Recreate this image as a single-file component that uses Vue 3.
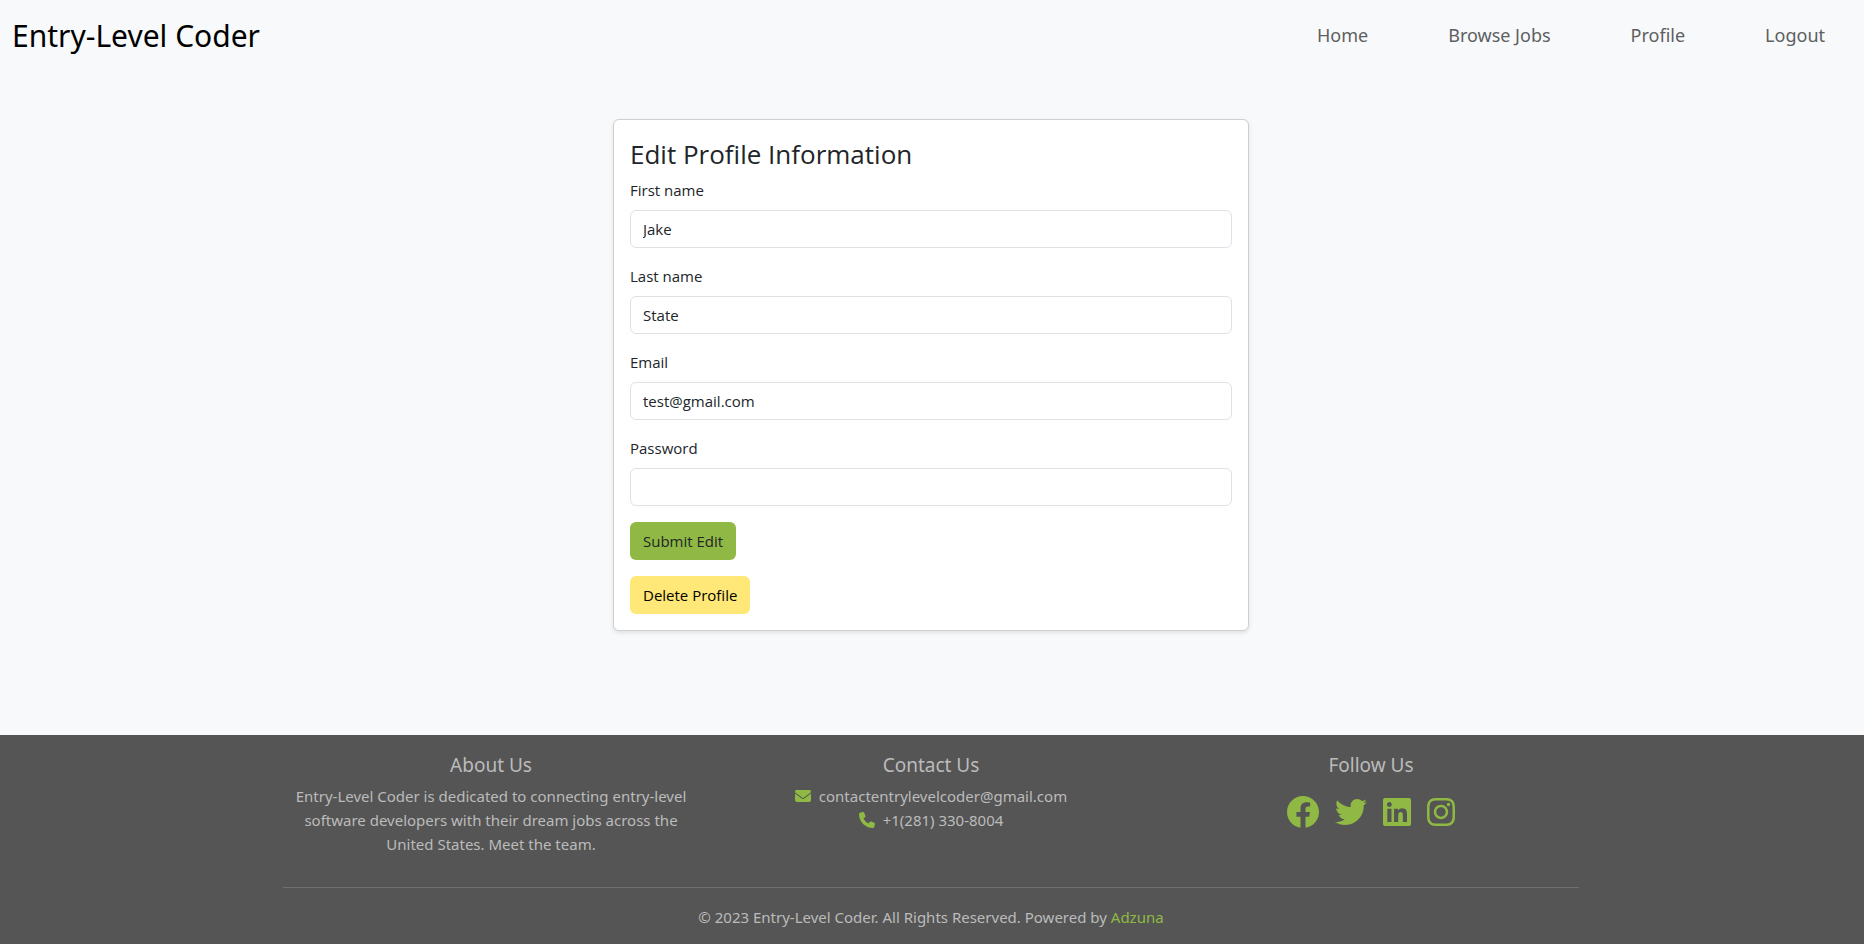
<script setup>
import { ref } from 'vue'

const links = ['Home', 'Browse Jobs', 'Profile', 'Logout']
const fields = ref([
  { id: 'first-name', label: 'First name', type: 'text', value: 'Jake' },
  { id: 'last-name', label: 'Last name', type: 'text', value: 'State' },
  { id: 'email', label: 'Email', type: 'email', value: 'test@gmail.com' },
  { id: 'password', label: 'Password', type: 'password', value: '' }
])
const socials = [
  { name: 'Facebook', box: '8 8 496 496', w: 32, d: 'M504 256C504 119 393 8 256 8S8 119 8 256c0 123.78 90.69 226.38 209.25 245V327.69h-63V256h63v-54.64c0-62.15 37-96.48 93.67-96.48 27.14 0 55.52 4.84 55.52 4.84v61h-31.28c-30.8 0-40.41 19.12-40.41 38.73V256h68.78l-11 71.69h-57.78V501C413.31 482.38 504 379.78 504 256z' },
  { name: 'Twitter', box: '0 0 512 512', w: 32, d: 'M459.37 151.716c.325 4.548.325 9.097.325 13.645 0 138.72-105.583 298.558-298.558 298.558-59.452 0-114.68-17.219-161.137-47.106 8.447.974 16.568 1.299 25.34 1.299 49.055 0 94.213-16.568 130.274-44.832-46.132-.975-84.792-31.188-98.112-72.772 6.498.974 12.995 1.624 19.818 1.624 9.421 0 18.843-1.3 27.614-3.573-48.081-9.747-84.143-51.98-84.143-102.985v-1.299c13.969 7.797 30.214 12.67 47.431 13.319-28.264-18.843-46.781-51.005-46.781-87.391 0-19.492 5.197-37.36 14.294-52.954 51.655 63.675 129.3 105.258 216.365 109.807-1.624-7.797-2.599-15.918-2.599-24.04 0-57.828 46.782-104.934 104.934-104.934 30.213 0 57.502 12.67 76.67 33.137 23.715-4.548 46.456-13.32 66.599-25.34-7.798 24.366-24.366 44.833-46.132 57.827 21.117-2.273 41.584-8.122 60.426-16.243-14.292 20.791-32.161 39.308-52.628 54.253z' },
  { name: 'LinkedIn', box: '0 0 448 512', w: 28, d: 'M416 32H31.9C14.3 32 0 46.5 0 64.3v383.4C0 465.5 14.3 480 31.9 480H416c17.6 0 32-14.5 32-32.3V64.3c0-17.8-14.4-32.3-32-32.3zM135.4 416H69V202.2h66.5V416zm-33.2-243c-21.3 0-38.5-17.3-38.5-38.5S80.9 96 102.2 96c21.2 0 38.5 17.3 38.5 38.5 0 21.3-17.2 38.5-38.5 38.5zm282.1 243h-66.4V312c0-24.8-.5-56.7-34.5-56.7-34.6 0-39.9 27-39.9 54.9V416h-66.4V202.2h63.7v29.2h.9c8.9-16.8 30.6-34.5 62.9-34.5 67.2 0 79.7 44.3 79.7 101.9V416z' },
  { name: 'Instagram', box: '0 0 448 512', w: 28, d: 'M224.1 141c-63.6 0-114.9 51.3-114.9 114.9s51.3 114.9 114.9 114.9S339 319.5 339 255.9 287.7 141 224.1 141zm0 189.6c-41.1 0-74.7-33.5-74.7-74.7s33.5-74.7 74.7-74.7 74.7 33.5 74.7 74.7-33.6 74.7-74.7 74.7zm146.4-194.3c0 14.9-12 26.8-26.8 26.8-14.9 0-26.8-12-26.8-26.8s12-26.8 26.8-26.8 26.8 12 26.8 26.8zm76.1 27.2c-1.7-35.9-9.9-67.7-36.2-93.9-26.2-26.2-58-34.4-93.9-36.2-37-2.1-147.9-2.1-184.9 0-35.8 1.7-67.6 9.9-93.9 36.1s-34.4 58-36.2 93.9c-2.1 37-2.1 147.9 0 184.9 1.7 35.9 9.9 67.7 36.2 93.9s58 34.4 93.9 36.2c37 2.1 147.9 2.1 184.9 0 35.9-1.7 67.7-9.9 93.9-36.2 26.2-26.2 34.4-58 36.2-93.9 2.1-37 2.1-147.8 0-184.8zM398.8 388c-7.8 19.6-22.9 34.7-42.6 42.6-29.5 11.7-99.5 9-132.1 9s-102.7 2.6-132.1-9c-19.6-7.8-34.7-22.9-42.6-42.6-11.7-29.5-9-99.5-9-132.1s-2.6-102.7 9-132.1c7.8-19.6 22.9-34.7 42.6-42.6 29.5-11.7 99.5-9 132.1-9s102.7-2.6 132.1 9c19.6 7.8 34.7 22.9 42.6 42.6 11.7 29.5 9 99.5 9 132.1s2.7 102.7-9 132.1z' }
]
</script>

<template>
  <div class="page">
    <header class="navbar">
      <a class="brand" href="#">Entry-Level Coder</a>
      <nav class="links">
        <a v-for="link in links" :key="link" href="#">{{ link }}</a>
      </nav>
    </header>

    <main class="main">
      <form class="card" @submit.prevent>
        <h1>Edit Profile Information</h1>
        <div v-for="field in fields" :key="field.id" class="field">
          <label :for="field.id">{{ field.label }}</label>
          <input :id="field.id" v-model="field.value" :type="field.type" />
        </div>
        <button class="btn submit" type="submit">Submit Edit</button>
        <button class="btn delete" type="button">Delete Profile</button>
      </form>
    </main>

    <footer class="footer">
      <div class="container">
        <div class="columns">
          <section>
            <h2>About Us</h2>
            <p>Entry-Level Coder is dedicated to connecting entry-level software developers with their dream jobs across the United States. Meet the team.</p>
          </section>
          <section>
            <h2>Contact Us</h2>
            <ul class="contact">
              <li>
                <svg viewBox="0 0 512 512" aria-hidden="true"><path d="M48 64C21.500 64 0 85.500 0 112c0 15.100 7.100 29.300 19.200 38.400L236.800 313.600c11.400 8.500 27 8.500 38.400 0L492.800 150.400c12.100-9.100 19.200-23.300 19.200-38.400 0-26.500-21.500-48-48-48H48zM0 176V384c0 35.300 28.700 64 64 64H448c35.300 0 64-28.700 64-64V176L294.400 339.200c-22.800 17.100-54 17.100-76.800 0L0 176z" /></svg>
                <span>contactentrylevelcoder@gmail.com</span>
              </li>
              <li>
                <svg viewBox="0 0 512 512" aria-hidden="true"><path d="M164.900 24.600c-7.700-18.600-28-28.500-47.400-23.200l-88 24C12.100 30.200 0 46 0 64C0 311.400 200.600 512 448 512c18 0 33.800-12.100 38.600-29.500l24-88c5.300-19.400-4.600-39.700-23.200-47.400l-96-40c-16.300-6.800-35.200-2.100-46.300 11.600L304.700 368C234.300 334.700 177.300 277.700 144 207.300L193.300 167c13.700-11.200 18.400-30 11.600-46.300l-40-96z" /></svg>
                <span>+1(281) 330-8004</span>
              </li>
            </ul>
          </section>
          <section>
            <h2>Follow Us</h2>
            <div class="socials">
              <a v-for="s in socials" :key="s.name" href="#" :aria-label="s.name">
                <svg :viewBox="s.box" :width="s.w" height="32"><path :d="s.d" /></svg>
              </a>
            </div>
          </section>
        </div>
        <hr />
        <p class="copyright">© 2023 Entry-Level Coder. All Rights Reserved. Powered by <a href="#">Adzuna</a></p>
      </div>
    </footer>
  </div>
</template>

<style>
body {
  margin: 0;
  background: #f8f9fb;
}
</style>

<style scoped>
.page {
  display: flex;
  flex-direction: column;
  min-height: 100vh;
  color: #212529;
  font-family: "Segoe UI", "Open Sans", "Noto Sans", sans-serif;
  font-size: 15px;
  line-height: 24px;
}
.page * {
  box-sizing: border-box;
}
.navbar {
  display: flex;
  align-items: flex-start;
  justify-content: space-between;
  padding: 12px;
  font-family: "Segoe UI", "Noto Sans", "Open Sans", sans-serif;
}
.brand {
  color: #000;
  font-size: 30px;
  line-height: 48px;
  text-decoration: none;
}
.links {
  display: flex;
  gap: 80px;
  padding: 8px 27px 0 0;
}
.links a {
  color: #5d5f61;
  font-size: 18px;
  line-height: 30px;
  text-decoration: none;
}
.main {
  flex: 1;
  padding: 47px 14px 104px 12px;
}
.card {
  display: flex;
  flex-direction: column;
  align-items: flex-start;
  width: 100%;
  max-width: 636px;
  margin: 0 auto;
  padding: 16px;
  border: 1px solid #cdcfd1;
  border-radius: 6px;
  background: #fff;
  box-shadow: 0 2px 4px rgba(0, 0, 0, 0.1);
}
h1 {
  margin: 0 0 6px;
  font-size: 26px;
  font-weight: 400;
  line-height: 36px;
}
.field {
  width: 100%;
  margin-bottom: 16px;
}
.field label {
  display: block;
  width: fit-content;
  margin-bottom: 8px;
}
.field input {
  display: block;
  width: 100%;
  height: 38px;
  padding: 6px 12px;
  border: 1px solid #dee2e6;
  border-radius: 6px;
  background: #fff;
  color: #212529;
  font: inherit;
}
.btn {
  padding: 7px 13px;
  border: 0;
  border-radius: 6px;
  font: inherit;
}
.submit {
  margin-bottom: 16px;
  background: #8fb944;
  color: #212529;
}
.delete {
  background: #ffe877;
  color: #000;
}
.footer {
  padding: 17px 2px 10px 0;
  background: #555;
  color: #bbb;
  font-family: "Segoe UI", "Noto Sans", "Open Sans", sans-serif;
}
.container {
  max-width: 1320px;
  margin: 0 auto;
  padding: 0 12px;
}
.columns {
  display: grid;
  grid-template-columns: repeat(3, 1fr);
  gap: 24px;
  text-align: center;
}
h2 {
  margin: 0 0 6px;
  font-size: 19px;
  font-weight: 400;
  line-height: 26px;
}
.columns p {
  margin: 0;
  padding: 0 8px;
}
.contact {
  margin: 0;
  padding: 0;
  list-style: none;
}
.contact li {
  display: flex;
  align-items: center;
  justify-content: center;
  gap: 8px;
}
.contact svg {
  width: 16px;
  height: 16px;
}
svg {
  display: block;
  fill: #8fb944;
}
.socials {
  display: flex;
  justify-content: center;
  gap: 16px;
  padding-top: 12px;
}
hr {
  margin: 31px 0 17px;
  border: 0;
  border-top: 1px solid #707070;
}
.copyright {
  margin: 0;
  padding-bottom: 5px;
  text-align: center;
}
.copyright a {
  color: #8fb944;
  text-decoration: none;
}
</style>
